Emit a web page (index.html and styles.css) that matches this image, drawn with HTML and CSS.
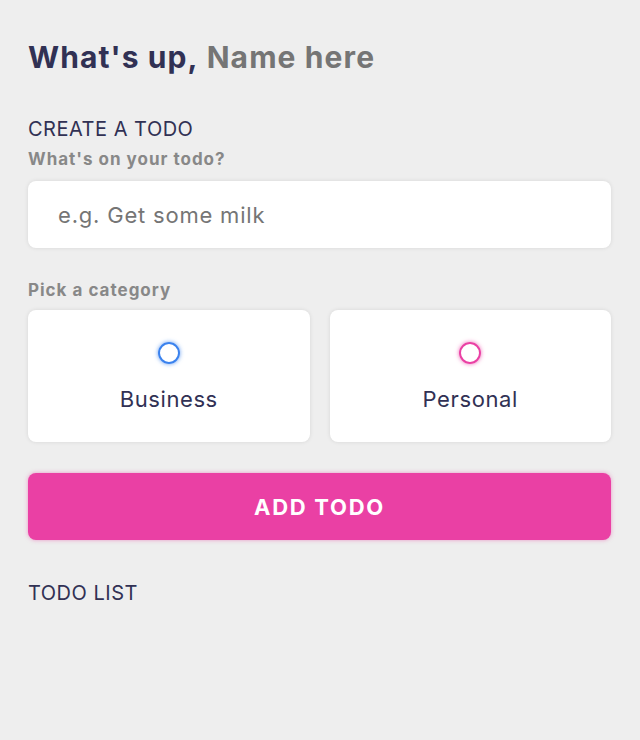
FILE: index.html
```html
<!DOCTYPE html>
<html lang="en">
<head>
<meta charset="utf-8">
<title>Todo</title>
<link rel="stylesheet" href="styles.css">
</head>
<body>
<main class="app">
  <section class="greeting">
    <h2 class="title"><span class="hello">What's up,</span><input class="name-input" type="text" placeholder="Name here"></h2>
  </section>
  <section class="create-todo">
    <h3 class="section-title">CREATE A TODO</h3>
    <form class="todo-form">
      <h4 class="field-label">What's on your todo?</h4>
      <input class="todo-input" type="text" placeholder="e.g. Get some milk">
      <h4 class="field-label field-label-tight">Pick a category</h4>
      <div class="options">
        <label class="option">
          <input class="radio" type="radio" name="category" value="business">
          <span class="bubble business"></span>
          <span class="option-text">Business</span>
        </label>
        <label class="option">
          <input class="radio" type="radio" name="category" value="personal">
          <span class="bubble personal"></span>
          <span class="option-text">Personal</span>
        </label>
      </div>
      <button class="submit" type="button">Add todo</button>
    </form>
  </section>
  <section class="todo-list">
    <h3 class="section-title">TODO LIST</h3>
  </section>
</main>
</body>
</html>
```
FILE: styles.css
```css
* { box-sizing: border-box; }
html, body { margin: 0; padding: 0; }
body {
  background: #eeeeee;
  font-family: Inter, "Open Sans", sans-serif;
  color: #313154;
}
.app {
  padding: 0 29px 0 28px;
}
.greeting { padding-top: 39px; }
.title {
  display: flex;
  align-items: center;
  margin: 0;
  font-size: 30px;
  line-height: 36px;
  font-weight: 700;
  letter-spacing: 1.1px;
  color: #313154;
}
.hello {
  flex: none;
  white-space: nowrap;
}
.name-input {
  margin-left: 8px;
  flex: 1;
  min-width: 0;
  border: 0;
  background: transparent;
  font: inherit;
  letter-spacing: inherit;
  color: #313154;
  padding: 0;
  outline: none;
}
.name-input::placeholder { color: #757575; }
.create-todo { margin-top: 42px; }
.section-title {
  margin: 0 0 8px;
  font-size: 20px;
  line-height: 24px;
  font-weight: 400;
  letter-spacing: 0.5px;
  color: #313154;
}
.field-label {
  margin: 0 0 12px;
  font-size: 17px;
  line-height: 20px;
  font-weight: 700;
  letter-spacing: 1px;
  color: #888888;
}
.field-label-tight { margin-bottom: 10px; }
.todo-input {
  display: block;
  width: 100%;
  height: 67px;
  margin: 0 0 32px;
  padding: 0 30px;
  border: 0;
  border-radius: 8px;
  background: #fff;
  box-shadow: 0 0 4px rgba(0,0,0,0.1);
  font-family: inherit;
  font-size: 22px;
  letter-spacing: 0.8px;
  color: #313154;
  outline: none;
}
.todo-input::placeholder { color: #757575; }
.options {
  display: grid;
  grid-template-columns: 1fr 1fr;
  gap: 20px;
  margin-bottom: 31px;
}
.option {
  display: flex;
  flex-direction: column;
  align-items: center;
  justify-content: flex-start;
  height: 132px;
  padding-top: 32px;
  background: #fff;
  border-radius: 8px;
  box-shadow: 0 0 4px rgba(0,0,0,0.1);
  cursor: pointer;
}
.radio { display: none; }
.bubble {
  display: block;
  width: 22px;
  height: 22px;
  border-radius: 50%;
  border: 2px solid #3a82ee;
  box-shadow: 0 0 4px rgba(58,130,238,0.75);
}
.bubble.personal {
  border-color: #ea40a4;
  box-shadow: 0 0 4px rgba(234,64,164,0.75);
}
.option-text {
  margin-top: 22px;
  font-size: 22px;
  line-height: 26px;
  letter-spacing: 0.6px;
  color: #313154;
}
.submit {
  display: block;
  width: 100%;
  height: 67px;
  border: 0;
  border-radius: 8px;
  background: #ea40a4;
  box-shadow: 0 0 4px rgba(234,64,164,0.5);
  color: #fff;
  font-family: inherit;
  font-size: 22px;
  font-weight: 700;
  letter-spacing: 1.7px;
  text-transform: uppercase;
  cursor: pointer;
}
.todo-list { margin-top: 41px; }
```
